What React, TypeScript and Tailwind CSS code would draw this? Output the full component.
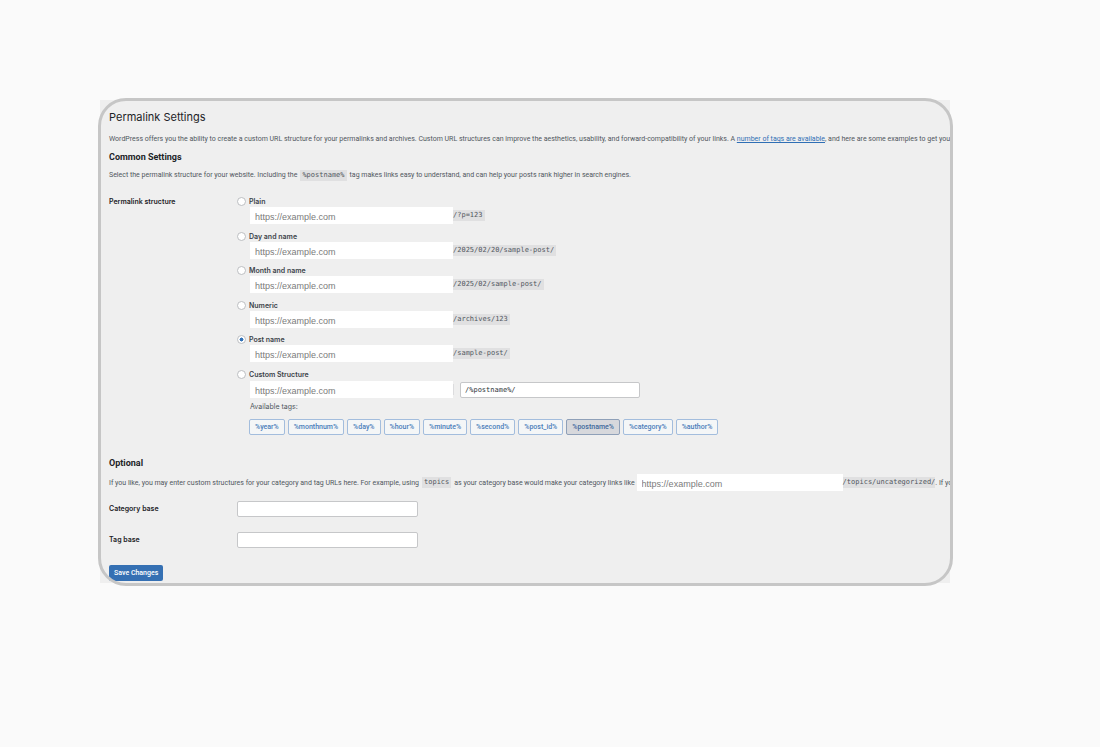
import { ReactNode } from 'react';
import { clsx } from 'clsx';

const SITE_URL = 'https://example.com';

const structures = [
  { id: 'plain', label: 'Plain', path: '/?p=123' },
  { id: 'day', label: 'Day and name', path: '/2025/02/20/sample-post/' },
  { id: 'month', label: 'Month and name', path: '/2025/02/sample-post/' },
  { id: 'numeric', label: 'Numeric', path: '/archives/123' },
  { id: 'post', label: 'Post name', path: '/sample-post/' },
  { id: 'custom', label: 'Custom Structure', path: null },
];

const tags = [
  '%year%',
  '%monthnum%',
  '%day%',
  '%hour%',
  '%minute%',
  '%second%',
  '%post_id%',
  '%postname%',
  '%category%',
  '%author%',
];

function Code({ children }: { children: ReactNode }) {
  return (
    <code className="h-[11px] bg-[#e0e0e1] font-['DejaVu_Sans_Mono',monospace] text-[7px] leading-[11px] text-[#50575e]">
      {children}
    </code>
  );
}

function SiteUrl({ label, className }: { label: string; className?: string }) {
  return (
    <input
      type="text"
      aria-label={label}
      defaultValue={SITE_URL}
      className={clsx(
        "h-[17px] shrink-0 bg-white px-[5px] pt-[2px] font-['Liberation_Sans',sans-serif] text-[9px] text-[#7b7b7b] outline-none",
        className,
      )}
    />
  );
}

function BaseField({ id, label }: { id: string; label: string }) {
  return (
    <div className="grid grid-cols-[128px_1fr] items-center">
      <label htmlFor={id} className="font-['Inter',sans-serif] text-[7px] font-semibold text-[#1d2327]">
        {label}
      </label>
      <input
        id={id}
        type="text"
        className="h-4 w-[181px] rounded-[2px] border border-[#c6c7c9] bg-white px-1 text-[7px] outline-none"
      />
    </div>
  );
}

export default function App() {
  return (
    <main className="min-h-screen bg-[#fafafa] pt-[100px] pr-[150px] pl-[100px] font-['Roboto',sans-serif] text-[#50575e]">
      <div className="relative bg-[#efefef]">
        <form
          className="overflow-hidden pt-[9px] pb-[2px] pl-[9px] text-[7px] leading-3"
          onSubmit={(e) => e.preventDefault()}
        >
          <h1 className="font-['Inter',sans-serif] text-[11px] leading-4 text-[#1d2327]">Permalink Settings</h1>
          <p className="mt-2 whitespace-nowrap">
            WordPress offers you the ability to create a custom URL structure for your permalinks and archives. Custom
            URL structures can improve the aesthetics, usability, and forward-compatibility of your links. A{' '}
            <a href="#tags" className="text-[#2f6fb5] underline">
              number of tags are available
            </a>
            , and here are some examples to get you
          </p>

          <h2 className="mt-[6px] text-[9px] font-bold text-[#1d2327]">Common Settings</h2>
          <p className="mt-[6px] flex items-center gap-[3px] whitespace-nowrap">
            Select the permalink structure for your website. Including the
            <span className="flex bg-[#e0e0e1] px-[2px]">
              <Code>%postname%</Code>
            </span>
            tag makes links easy to understand, and can help your posts rank higher in search engines.
          </p>

          <div className="mt-[14px] grid grid-cols-[128px_1fr]">
            <h3 className="font-['Inter',sans-serif] text-[7px] leading-[13px] font-semibold text-[#1d2327]">
              Permalink structure
            </h3>
            <div>
              <div role="radiogroup" aria-label="Permalink structure">
                {structures.map((s) => (
                  <div key={s.id} className="h-[35px] last:h-[30px] not-last:even:h-[34px]">
                    <div className="flex h-3 items-center gap-[3px]">
                      <input
                        type="radio"
                        id={s.id}
                        name="structure"
                        defaultChecked={s.id === 'post'}
                        className="size-[9px] appearance-none rounded-full border border-[#bcbec1] bg-white checked:bg-[radial-gradient(circle,#3272b8_35%,#ffffff_45%)]"
                      />
                      <label
                        htmlFor={s.id}
                        className="font-['Inter',sans-serif] text-[7px] leading-[13px] font-semibold text-[#3c434a]"
                      >
                        {s.label}
                      </label>
                    </div>
                    <div className={clsx('flex items-center pl-[13px]', !s.path && 'pt-px')}>
                      <SiteUrl label={`${s.label} site address`} className="w-[203px]" />
                      {s.path ? (
                        <span className="flex bg-[#e0e0e1] pr-[2px]">
                          <Code>{s.path}</Code>
                        </span>
                      ) : (
                        <>
                          <span className="h-[11px] w-px bg-[#dcdcde]" />
                          <input
                            type="text"
                            aria-label="Custom structure"
                            defaultValue="/%postname%/"
                            className="ml-[6px] h-4 w-[180px] rounded-[2px] border border-[#c6c7c9] bg-white px-1 font-['DejaVu_Sans_Mono',monospace] text-[7px] text-[#2c3338] outline-none"
                          />
                        </>
                      )}
                    </div>
                  </div>
                ))}
              </div>
              <p className="mt-[3px] pl-[13px] font-['Inter',sans-serif]">Available tags:</p>
              <div id="tags" className="mt-[6px] flex gap-[3px] pl-3">
                {tags.map((tag) => (
                  <button
                    key={tag}
                    type="button"
                    className={clsx(
                      'h-4 rounded-[2px] border px-[5px] leading-[14px] font-medium',
                      tag === '%postname%'
                        ? 'border-[#8fa0b8] bg-[#d7d8dc] text-[#41699c]'
                        : 'border-[#a3bddd] bg-[#f4f6f7] text-[#4a7dba]',
                    )}
                  >
                    {tag}
                  </button>
                ))}
              </div>
            </div>
          </div>

          <h2 className="mt-[22px] text-[9px] font-bold text-[#1d2327]">Optional</h2>
          <div className="mt-[5px] flex items-center whitespace-nowrap">
            If you like, you may enter custom structures for your category and tag URLs here. For example, using
            <span className="mx-[3px] flex bg-[#e0e0e1] px-[2px]">
              <Code>topics</Code>
            </span>
            <span className="mr-[2px]">as your category base would make your category links like</span>
            <SiteUrl label="Category link site address" className="w-[206px]" />
            <span className="flex bg-[#e0e0e1]">
              <Code>/topics/uncategorized/</Code>
            </span>
            <span>. If you</span>
          </div>

          <div className="mt-[10px] flex flex-col gap-[15px]">
            <BaseField id="category-base" label="Category base" />
            <BaseField id="tag-base" label="Tag base" />
          </div>

          <button type="submit" className="mt-[17px] block h-4 rounded-[2px] bg-[#3570b3] px-[5px] font-medium text-white">
            Save Changes
          </button>
        </form>
        {/* rounded frame laid over the square panel */}
        <div className="pointer-events-none absolute -top-[2px] -right-[3px] -bottom-[3px] -left-[2px] rounded-[28px] border-[3px] border-[#c6c6c6]" />
      </div>
    </main>
  );
}
